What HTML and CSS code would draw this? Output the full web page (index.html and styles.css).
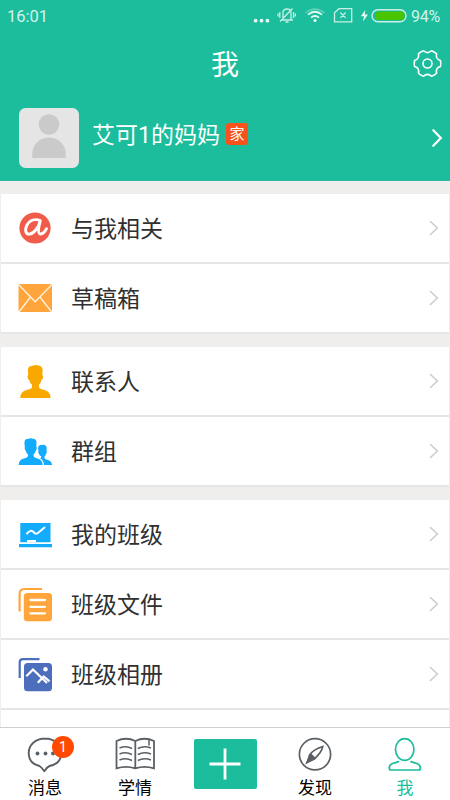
FILE: index.html
```html
<!DOCTYPE html>
<html lang="zh-CN">
<head>
<meta charset="utf-8">
<title>我</title>
<link rel="stylesheet" href="styles.css">
</head>
<body>
<div class="app">
  <header class="header">
    <div class="status">
      <span class="clock">16:01</span>
      <svg class="status-icons" viewBox="250 0 160 32" width="160" height="32" fill="none" stroke="#c9f0e6" stroke-width="1.3">
        <g fill="#e4f8f3" stroke="none"><circle cx="256.600" cy="20.700" r="1.900"/><circle cx="262.500" cy="20.700" r="1.900"/><circle cx="268.400" cy="20.700" r="1.900"/></g>
        <path d="M282 20h12M284 20v-7q0-4 4-4t4 4v7M286.500 22h3M280.800 12v6M279 13.500v3M294.500 12v6M296.300 13.500v3M281 21.500L293.500 8.500"/>
        <path d="M306.500 12.800Q316 5.500 325.500 12.800" stroke="#5fd1b9" stroke-width="1.600"/>
        <path d="M309 14.600Q316 8.800 323 14.600M312 17.600Q316 14.300 320 17.600" stroke="#e4f8f3" stroke-width="1.800"/>
        <circle cx="316" cy="20.500" r="1.600" fill="#e4f8f3" stroke="none"/>
        <path d="M340 8.700h12.700v13.100h-17.200v-9zM341.300 12.500l5.400 5.400M346.700 12.500l-5.400 5.400"/>
        <path d="M366.300 10l-4.500 6.200h3.200l-1 5.300 5-7h-3.200z" fill="#e4f8f3" stroke="none"/>
        <rect x="373" y="9.700" width="34" height="12" rx="6" stroke="#c9f0e6" stroke-width="1.400"/>
        <rect x="376.500" y="11.500" width="29" height="8.500" rx="3.500" fill="#49c400" stroke="none"/>
      </svg>
      <span class="percent">94%</span>
    </div>
    <div class="titlebar">
      <h1 class="title">我</h1>
      <svg class="gear" viewBox="-14.500 -14.500 29 29" width="29" height="29" fill="none" stroke="#fff" stroke-width="1.600" stroke-linejoin="round">
        <path d="M12.960-3Q13.600 0 12.960 3Q7.800 4.500 9.070 9.730Q6.800 11.800 3.890 12.720Q0 9-3.890 12.720Q-6.800 11.800-9.070 9.730Q-7.800 4.500-12.960 3Q-13.600 0-12.960-3Q-7.800-4.500-9.070-9.730Q-6.800-11.800-3.890-12.720Q0-9 3.890-12.720Q6.800-11.800 9.070-9.730Q7.800-4.500 12.960-3Z"/>
        <circle r="4.500"/>
      </svg>
    </div>
    <div class="profile">
      <svg class="avatar" viewBox="0 0 60 60" width="60" height="60">
        <rect width="60" height="60" rx="6.500" fill="#e5e5e5"/>
        <circle cx="30" cy="16.500" r="10.300" fill="#cacaca"/>
        <path d="M13.300 50V44A16.800 16.200 0 0 1 46.700 44V50Z" fill="#cacaca"/>
      </svg>
      <span class="name">艾可1的妈妈</span>
      <span class="tag">家</span>
      <svg class="more" viewBox="0 0 12 20" width="12" height="20" fill="none" stroke="#fff" stroke-width="2.300" stroke-linecap="round"><path d="M2.300 2.300L9.800 10L2.300 17.700"/></svg>
    </div>
  </header>

  <main class="content">
    <section class="group">
      <div class="row">
        <svg class="icon" viewBox="18 210.500 36 36">
          <circle cx="35" cy="228.500" r="15.600" fill="#f15b49"/>
          <path d="M40.300 221C35.500 219.300 30 220 27 225.500C24.200 231 26 235 29.500 234.600C34 234 38.500 228 40.300 221.300C38.500 228 37.500 233.500 40 234.300C42.500 235 45 232 46.500 229.300" fill="none" stroke="#fff" stroke-width="2.900" stroke-linecap="round" stroke-linejoin="round"/>
        </svg>
        <span class="label">与我相关</span>
        <svg class="chevron" viewBox="0 0 10 16"><path d="M1.500 1.500L8.300 8L1.500 14.500"/></svg>
      </div>
      <div class="row">
        <svg class="icon" viewBox="18 280 36 36">
          <rect x="18.500" y="284" width="33.500" height="28" rx="2" fill="#ffa53c"/>
          <path d="M19 285L35.200 301.700L51.500 285M19.300 311.500L30.500 297M51.300 311.500L40 297" fill="none" stroke="#fff3df" stroke-width="1.300"/>
        </svg>
        <span class="label">草稿箱</span>
        <svg class="chevron" viewBox="0 0 10 16"><path d="M1.500 1.500L8.300 8L1.500 14.500"/></svg>
      </div>
    </section>

    <section class="group">
      <div class="row">
        <svg class="icon" viewBox="18 363 36 36" fill="#f9a800">
          <path d="M28.200 368Q29.500 365.500 32 366Q35 364.300 38.500 365.500Q42.500 366 42.600 370L42.300 375Q43.800 376 42.800 378.300Q42.300 380 41.400 380.300Q41 383 39 384.800V387Q39.500 389 43.500 389.800Q50.500 391 50.500 398H20.300Q20.300 391 27.500 389.800Q31.500 389 32 387V384.800Q29.800 383 29.300 380.300Q28.300 380 27.800 378.300Q27 376 28.300 375Q27.500 371 28.200 368Z"/>
        </svg>
        <span class="label">联系人</span>
        <svg class="chevron" viewBox="0 0 10 16"><path d="M1.500 1.500L8.300 8L1.500 14.500"/></svg>
      </div>
      <div class="row">
        <svg class="icon" viewBox="18 433 36 36" fill="#13abfc">
          <path d="M25 440Q26.500 438.500 28 439Q30.500 437.500 33 438.700Q36.500 439 36.500 442.500L36.300 446.500Q37.300 448 36.500 449.500L35.600 451Q35 453 33.600 454.500V456.300Q34 457.700 37.500 458.500Q42.500 459.500 42.700 465H18.700Q18.700 459.500 24 458.500Q27.500 457.700 28 456.300V454.500Q26.300 453 25.800 451Q24.200 449.500 24.800 446.500Q24 442 25 440Z"/>
          <path d="M38.400 446.500Q39 444.800 41 445Q44 444 46 445.700Q47 447 46.600 451Q47.400 452 46 454Q45.700 455.500 44.500 456.500V458.200Q45 459.300 48 460Q51.800 461 52 465H44Q43.700 460.500 40 458.300Q41.300 458 41.300 456.500Q39.500 455.500 39 454Q37.600 452 38.500 451Q37.800 448 38.400 446.500Z"/>
        </svg>
        <span class="label">群组</span>
        <svg class="chevron" viewBox="0 0 10 16"><path d="M1.500 1.500L8.300 8L1.500 14.500"/></svg>
      </div>
    </section>

    <section class="group">
      <div class="row">
        <svg class="icon" viewBox="18 516 36 36">
          <path d="M20.300 523H50.500V542.300H20.300ZM19 544H52V547.300H19Z" fill="#13abfc"/>
          <path d="M27 540h9v2.400h-9z" fill="#fff"/>
          <path d="M27 533.500Q31 529 33.500 532Q36 535 38.500 532.500L44.500 527.500" fill="none" stroke="#fff" stroke-width="2" stroke-linecap="round"/>
        </svg>
        <span class="label">我的班级</span>
        <svg class="chevron" viewBox="0 0 10 16"><path d="M1.500 1.500L8.300 8L1.500 14.500"/></svg>
      </div>
      <div class="row">
        <svg class="icon" viewBox="18 586 36 36" fill="none">
          <path d="M19.600 611.500V594Q19.600 589 24.600 589H42" stroke="#ffa53c" stroke-width="2.200"/>
          <rect x="23.800" y="593" width="28.200" height="28.300" rx="3.500" fill="#ffa53c"/>
          <path d="M30.500 600H45M30.500 606.800H45M30.500 613.300H45" stroke="#fff" stroke-width="2.300" stroke-linecap="round"/>
        </svg>
        <span class="label">班级文件</span>
        <svg class="chevron" viewBox="0 0 10 16"><path d="M1.500 1.500L8.300 8L1.500 14.500"/></svg>
      </div>
      <div class="row">
        <svg class="icon" viewBox="18 656 36 36" fill="none">
          <path d="M19.700 678V662.500Q19.700 659.200 23 659.200H39.500" stroke="#4c6ebd" stroke-width="2.200"/>
          <rect x="24" y="663" width="28" height="28.300" rx="3.500" fill="#4c6ebd"/>
          <path d="M26.300 676.300L33 669.500L47 683M37.800 682.700L43.700 676.500L49.500 681.300" stroke="#fff" stroke-width="2.200"/>
          <circle cx="45.500" cy="669.300" r="2.200" fill="#fff"/>
        </svg>
        <span class="label">班级相册</span>
        <svg class="chevron" viewBox="0 0 10 16"><path d="M1.500 1.500L8.300 8L1.500 14.500"/></svg>
      </div>
      <div class="row"></div>
    </section>
  </main>

  <nav class="tabs">
    <div class="tab">
      <svg class="tab-icon" viewBox="25 735 40 38" fill="none" stroke="#5b6065" stroke-width="1.900" stroke-linejoin="round">
        <path d="M45 738.500C35.500 738.500 28.700 745 28.700 753C28.700 760 33 764.500 39.500 766Q41.500 767 44.300 771.200Q47 767 49.500 766C57 764.500 61.300 760 61.300 753C61.300 745 54.500 738.500 45 738.500Z"/>
        <g fill="#5b6065" stroke="none"><circle cx="37.500" cy="753.500" r="1.900"/><circle cx="45.500" cy="753.500" r="1.900"/><circle cx="53" cy="753.500" r="1.900"/></g>
      </svg>
      <span class="badge">1</span>
      <span class="tab-label">消息</span>
    </div>
    <div class="tab">
      <svg class="tab-icon" viewBox="115 735 40 38" fill="none" stroke="#5b6065" stroke-width="1.800">
        <path d="M135.300 741Q126 736.500 116.500 741V768.300Q126 765.300 135.300 768.300Q144.500 765.300 154 768.300V741Q144.500 736.500 135.300 741V768.300"/>
        <path d="M119.500 748Q126 745.500 132 748.500M119.500 754Q126 751.500 132 754.500M119.500 760Q126 757.500 132 760.500M137.800 748.500Q144 745.500 151 748M137.800 754.500Q144 751.500 151 754M137.800 760.500Q144 757.500 151 760M149 740v5.500" stroke-width="1.500"/>
      </svg>
      <span class="tab-label">学情</span>
    </div>
    <div class="tab tab-add">
      <div class="add"><svg viewBox="0 0 32 32" width="32" height="32" stroke="#fff" stroke-width="2.800"><path d="M16 0.500V31.500M0.500 16H31.500"/></svg></div>
    </div>
    <div class="tab">
      <svg class="tab-icon" viewBox="295 735 40 38" fill="none" stroke="#5b6065" stroke-width="1.700">
        <circle cx="315" cy="754.300" r="15.600"/>
        <path d="M322.800 746.500Q314 749 309.500 755L307.200 762.200L314 759Q321.500 753 322.800 746.500Z" stroke-width="1.600"/>
        <path d="M311 754.500L307 762.500L315 758.500Z" fill="#5b6065"/>
      </svg>
      <span class="tab-label">发现</span>
    </div>
    <div class="tab tab-active">
      <svg class="tab-icon" viewBox="385 735 40 38" fill="none" stroke="#1bbd9c" stroke-width="1.700" stroke-linejoin="round" stroke-linecap="round">
        <ellipse cx="404.700" cy="749.500" rx="9.200" ry="10.900"/>
        <path d="M398.500 761.600Q396 762.500 392.500 763.500Q389.300 764.800 389.300 768Q389.300 770 391 770H418.500Q420.500 770 420.500 768Q420.200 764.800 417 763.500Q413.500 762.500 411 761.600"/>
      </svg>
      <span class="tab-label">我</span>
    </div>
  </nav>
</div>
</body>
</html>
```
FILE: styles.css
```css
* {
  box-sizing: border-box;
}

body {
  margin: 0;
  background: #efeeed;
  font-family: Roboto, "Noto Sans CJK SC", sans-serif;
}

.app {
  width: 450px;
  height: 800px;
  display: flex;
  flex-direction: column;
  overflow: hidden;
}

.header {
  flex: none;
  height: 181px;
  background: #1bbd9c;
  color: #fff;
  border-bottom: 1px solid #33b99d;
}

.status {
  display: flex;
  align-items: center;
  height: 32px;
  padding: 0 7px;
  color: #d3f3eb;
  font-size: 16px;
}

.clock {
  flex: 1;
  font-size: 16.5px;
}

.status-icons {
  flex: none;
}

.percent {
  width: 32px;
  margin-left: 2px;
  font-size: 16px;
  letter-spacing: -0.2px;
}

.titlebar {
  display: grid;
  grid-template-columns: 1fr auto 1fr;
  align-items: center;
  height: 64px;
  padding: 0 8px;
}

.title {
  grid-column: 2;
  margin: 0;
  padding-top: 3px;
  font-size: 28px;
  font-weight: 400;
  line-height: 40px;
}

.gear {
  justify-self: end;
  margin-top: -1px;
}

.profile {
  display: flex;
  align-items: center;
  height: 84px;
  padding: 0 7px 0 19px;
}

.name {
  margin: -4px 6px 0 13px;
  font-size: 23px;
  line-height: 34px;
}

.tag {
  width: 22px;
  height: 22px;
  margin-top: -8px;
  border-radius: 3px;
  background: #f8531a;
  font-size: 15px;
  font-weight: 400;
  line-height: 22px;
  text-align: center;
}

.more {
  margin-left: auto;
}

.content {
  flex: 1;
  min-height: 0;
  overflow: hidden;
  display: flex;
  flex-direction: column;
  gap: 13px;
  padding: 13px 1px 0;
}

.group {
  flex: none;
  background: #fff;
}

.row {
  display: flex;
  align-items: center;
  height: 70px;
  padding: 0 10px 0 17px;
  border-bottom: 2px solid #e6e6e6;
}

.icon {
  flex: none;
  width: 36px;
  height: 36px;
}

.label {
  flex: 1;
  margin-left: 17px;
  padding-top: 3px;
  color: #303030;
  font-size: 23px;
  line-height: 34px;
}

.chevron {
  width: 10px;
  height: 16px;
  fill: none;
  stroke: #cdcdcd;
  stroke-width: 1.6;
  stroke-linecap: round;
}

.tabs {
  flex: none;
  display: grid;
  grid-template-columns: repeat(5, 1fr);
  height: 73px;
  border-top: 1px solid #cfcfcf;
  background: #fff;
}

.tab {
  position: relative;
  display: flex;
  flex-direction: column;
  align-items: center;
  padding-top: 7px;
  color: #000;
}

.tab-active {
  color: #1bbd9c;
}

.tab-icon {
  flex: none;
  width: 40px;
  height: 38px;
}

.tab-label {
  margin-top: 3px;
  font-size: 17px;
  line-height: 24px;
}

.badge {
  position: absolute;
  top: 8px;
  left: 52px;
  width: 22px;
  height: 22px;
  border-radius: 50%;
  background: #ff4a00;
  color: #fff;
  font-size: 14px;
  line-height: 22px;
  text-align: center;
}

.tab-add {
  padding-top: 11px;
}

.add {
  display: flex;
  align-items: center;
  justify-content: center;
  width: 63px;
  height: 50px;
  border-radius: 2px;
  background: #1bbd9c;
}
```
